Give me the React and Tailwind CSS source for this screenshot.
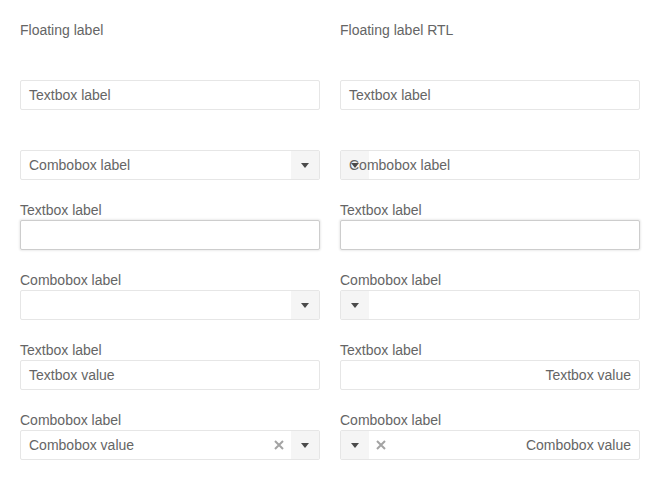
import React from "react";

const Arrow = () => (
  <svg width="8" height="5" viewBox="0 0 8 5" className="block">
    <polygon points="0,0 8,0 4,5" fill="#4a4a4a" />
  </svg>
);

const XIcon = () => (
  <svg width="10" height="10" viewBox="0 0 10 10" className="block">
    <path d="M1 1 L9 9 M9 1 L1 9" stroke="#a3a3a3" strokeWidth="2" />
  </svg>
);

const ArrowBtn = () => (
  <div className="w-[28px] h-full bg-[#f5f5f5] flex items-center justify-center shrink-0">
    <Arrow />
  </div>
);

const Clear = () => (
  <div className="w-[24px] h-full flex items-center justify-center shrink-0">
    <XIcon />
  </div>
);

const boxBase =
  "relative h-[30px] w-full border border-[#e6e6e6] rounded-[2px] bg-white flex items-stretch overflow-hidden";

function Block({ label, children }) {
  return (
    <div className="flex flex-col">
      <div className="h-[20px] leading-[20px]">{label}</div>
      {children}
      <div className="h-[20px]" />
    </div>
  );
}

function Column({ title, rtl }) {
  return (
    <div className="flex flex-col">
      <div className="h-[20px] leading-[20px]">{title}</div>
      <div className="h-[20px]" />
      {/* empty textbox, floating label inside */}
      <Block label="">
        <div className={boxBase}>
          <span className="absolute left-[8px] top-0 leading-[28px]">Textbox label</span>
        </div>
      </Block>
      {/* empty combobox */}
      <Block label="">
        <div className={boxBase + (rtl ? " flex-row-reverse" : "")}>
          <div className="flex-1" />
          <ArrowBtn />
          <span className="absolute left-[8px] top-0 leading-[28px]">Combobox label</span>
        </div>
      </Block>
      {/* focused textbox */}
      <Block label="Textbox label">
        <div className="h-[30px] w-full border border-[#cdcdcd] rounded-[2px] bg-white shadow-[0_0_2px_1px_rgba(0,0,0,0.08)]" />
      </Block>
      {/* combobox label above, empty */}
      <Block label="Combobox label">
        <div className={boxBase + (rtl ? " flex-row-reverse" : "")}>
          <div className="flex-1" />
          <ArrowBtn />
        </div>
      </Block>
      {/* textbox with value */}
      <Block label="Textbox label">
        <div className={boxBase}>
          <span className={"flex-1 px-[8px] leading-[28px] " + (rtl ? "text-right" : "")}>Textbox value</span>
        </div>
      </Block>
      {/* combobox with value */}
      <Block label="Combobox label">
        <div className={boxBase + (rtl ? " flex-row-reverse" : "")}>
          <span className={"flex-1 px-[8px] leading-[28px] " + (rtl ? "text-right" : "")}>Combobox value</span>
          <Clear />
          <ArrowBtn />
        </div>
      </Block>
    </div>
  );
}

export default function App() {
  return (
    <div
      className="w-[660px] h-[480px] bg-white p-[20px] grid grid-cols-2 gap-x-[20px] text-[14px] text-[#656565]"
      style={{ fontFamily: '"Liberation Sans", Arial, sans-serif' }}
    >
      <Column title="Floating label" />
      <Column title="Floating label RTL" rtl />
    </div>
  );
}
